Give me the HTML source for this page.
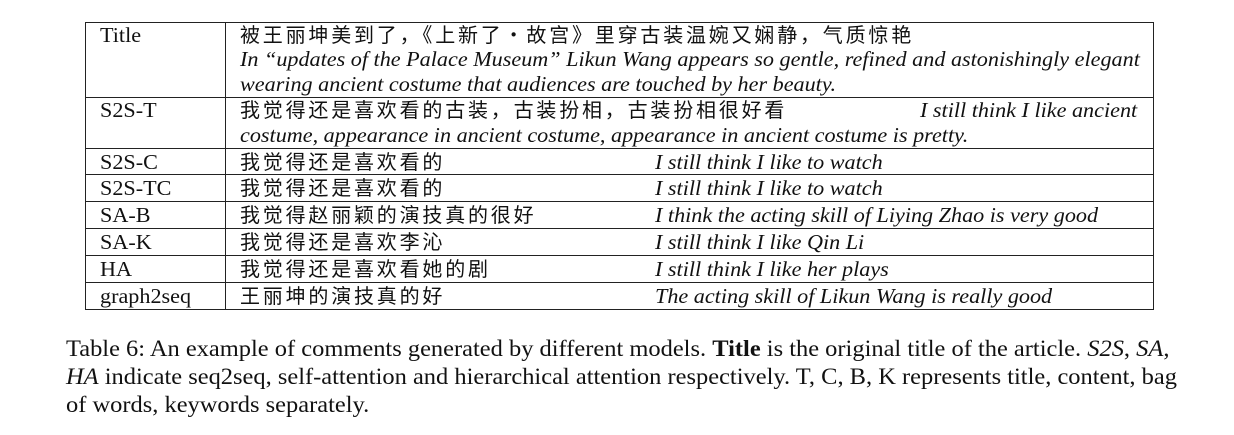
<!DOCTYPE html>
<html><head><meta charset="utf-8"><style>
body{margin:0;width:1234px;height:435px;background:#fff;position:relative;overflow:hidden;font-family:"Liberation Serif","Noto Serif CJK SC",serif;color:#111;}
.h{position:absolute;left:85px;width:1069px;height:1px;background:#222;}
.v{position:absolute;top:22px;height:288px;width:1px;background:#222;}
.t{position:absolute;font-size:21px;line-height:26px;white-space:nowrap;transform-origin:0 0;transform:scaleX(1.055);}
.c{font-family:"Noto Sans CJK SC","WenQuanYi Zen Hei",sans-serif;font-size:20px;letter-spacing:2.8px;transform:none;}
i{font-style:italic;}
.cap{position:absolute;left:66px;font-size:23px;line-height:28px;white-space:nowrap;transform-origin:0 0;transform:scaleX(1.063);}
</style></head><body>
<div class="h" style="top:22px"></div>
<div class="h" style="top:97px"></div>
<div class="h" style="top:148px"></div>
<div class="h" style="top:174px"></div>
<div class="h" style="top:201px"></div>
<div class="h" style="top:228px"></div>
<div class="h" style="top:255px"></div>
<div class="h" style="top:282px"></div>
<div class="h" style="top:309px"></div>
<div class="v" style="left:85px"></div>
<div class="v" style="left:225px"></div>
<div class="v" style="left:1153px"></div>

<div class="t" style="left:100px;top:22px">Title</div>
<div class="t c" style="left:240px;top:21px">被王丽坤美到了，《上新了·故宫》里穿古装温婉又娴静，气质惊艳</div>
<div class="t" style="left:240px;top:46px"><i>In “updates of the Palace Museum” Likun Wang appears so gentle, refined and astonishingly elegant</i></div>
<div class="t" style="left:240px;top:71px"><i>wearing ancient costume that audiences are touched by her beauty.</i></div>

<div class="t" style="left:100px;top:97px">S2S-T</div>
<div class="t c" style="left:240px;top:96px">我觉得还是喜欢看的古装，古装扮相，古装扮相很好看</div>
<div class="t" style="left:920px;top:97px"><i>I still think I like ancient</i></div>
<div class="t" style="left:240px;top:122px"><i>costume, appearance in ancient costume, appearance in ancient costume is pretty.</i></div>

<div class="t" style="left:100px;top:149px">S2S-C</div>
<div class="t c" style="left:240px;top:148px">我觉得还是喜欢看的</div>
<div class="t" style="left:655px;top:149px"><i>I still think I like to watch</i></div>

<div class="t" style="left:100px;top:175px">S2S-TC</div>
<div class="t c" style="left:240px;top:174px">我觉得还是喜欢看的</div>
<div class="t" style="left:655px;top:175px"><i>I still think I like to watch</i></div>

<div class="t" style="left:100px;top:202px">SA-B</div>
<div class="t c" style="left:240px;top:201px">我觉得赵丽颖的演技真的很好</div>
<div class="t" style="left:655px;top:202px"><i>I think the acting skill of Liying Zhao is very good</i></div>

<div class="t" style="left:100px;top:229px">SA-K</div>
<div class="t c" style="left:240px;top:228px">我觉得还是喜欢李沁</div>
<div class="t" style="left:655px;top:229px"><i>I still think I like Qin Li</i></div>

<div class="t" style="left:100px;top:256px">HA</div>
<div class="t c" style="left:240px;top:255px">我觉得还是喜欢看她的剧</div>
<div class="t" style="left:655px;top:256px"><i>I still think I like her plays</i></div>

<div class="t" style="left:100px;top:283px">graph2seq</div>
<div class="t c" style="left:240px;top:282px">王丽坤的演技真的好</div>
<div class="t" style="left:655px;top:283px"><i>The acting skill of Likun Wang is really good</i></div>

<div class="cap" style="top:335px">Table 6: An example of comments generated by different models. <b>Title</b> is the original title of the article. <i>S2S</i>, <i>SA</i>,</div>
<div class="cap" style="top:363px"><i>HA</i> indicate seq2seq, self-attention and hierarchical attention respectively. T, C, B, K represents title, content, bag</div>
<div class="cap" style="top:391px">of words, keywords separately.</div>
</body></html>
